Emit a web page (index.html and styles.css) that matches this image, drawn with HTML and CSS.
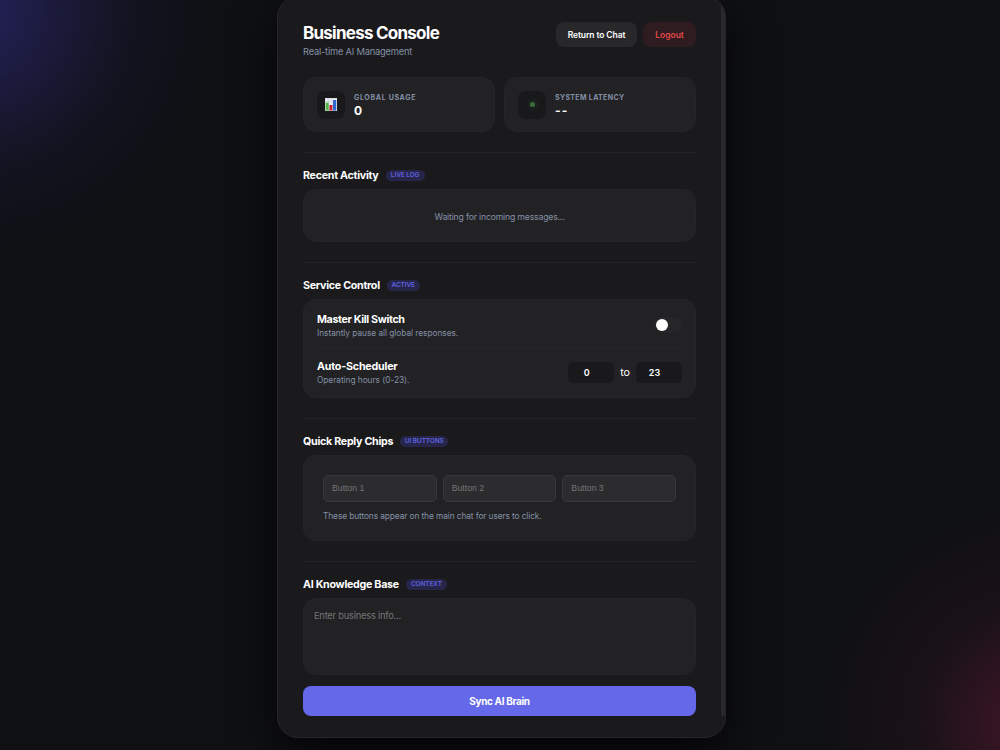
FILE: index.html
```
<!DOCTYPE html>
<html lang="en">
<head>
    <meta charset="UTF-8">
    <meta name="viewport" content="width=device-width, initial-scale=1.0">
    <title>Business Console</title>
    <link rel="stylesheet" href="styles.css">
</head>
<body>
    <main class="console">
        <!-- Header -->
        <header class="header">
            <div>
                <h1 class="title">Business Console</h1>
                <p class="subtitle">Real-time AI Management</p>
            </div>
            <div class="header-actions">
                <button class="btn btn-chat">Return to Chat</button>
                <button class="btn btn-logout">Logout</button>
            </div>
        </header>

        <!-- Stats -->
        <div class="stats">
            <div class="stat">
                <div class="stat-icon">
                    <svg width="12" height="13" viewBox="0 0 12 13">
                        <rect width="12" height="13" fill="#e6eaf3"/>
                        <path d="M0 .5H12M0 3.5H12M3.5 0V13M7.5 0V13" stroke="#c5ccda" stroke-width=".4"/>
                        <rect x=".6" y="4.6" width="3.1" height="8" fill="#55b649"/>
                        <rect x="4.4" y="7" width="3" height="5.6" fill="#c9252d"/>
                        <rect x="8" y="2" width="3.2" height="10.6" fill="#2f67cf"/>
                    </svg>
                </div>
                <div class="stat-text">
                    <div class="stat-label usage-label">GLOBAL USAGE</div>
                    <div class="stat-value">0</div>
                </div>
            </div>
            <div class="stat">
                <div class="stat-icon"><span class="dot"></span></div>
                <div class="stat-text">
                    <div class="stat-label latency-label">SYSTEM LATENCY</div>
                    <div class="stat-value dashes">--</div>
                </div>
            </div>
        </div>

        <!-- Recent Activity -->
        <section class="section">
            <h2 class="section-title">Recent Activity <span class="badge b-live">LIVE LOG</span></h2>
            <div class="box log">Waiting for incoming messages...</div>
        </section>

        <!-- Service Control -->
        <section class="section">
            <h2 class="section-title">Service Control <span class="badge b-active">ACTIVE</span></h2>
            <div class="box controls">
                <div class="control-row">
                    <div>
                        <h3 class="control-name kill">Master Kill Switch</h3>
                        <p class="control-desc">Instantly pause all global responses.</p>
                    </div>
                    <span class="switch"></span>
                </div>
                <div class="control-row">
                    <div>
                        <h3 class="control-name">Auto-Scheduler</h3>
                        <p class="control-desc">Operating hours (0-23).</p>
                    </div>
                    <div class="hours">
                        <input type="text" class="hour" value="0">
                        <span>to</span>
                        <input type="text" class="hour" value="23">
                    </div>
                </div>
            </div>
        </section>

        <!-- Quick Reply Chips -->
        <section class="section">
            <h2 class="section-title">Quick Reply Chips <span class="badge b-ui">UI BUTTONS</span></h2>
            <div class="box chips">
                <div class="chip-row">
                    <input type="text" class="chip" placeholder="Button 1">
                    <input type="text" class="chip" placeholder="Button 2">
                    <input type="text" class="chip" placeholder="Button 3">
                </div>
                <p class="chip-note">These buttons appear on the main chat for users to click.</p>
            </div>
        </section>

        <!-- AI Knowledge Base -->
        <section class="section">
            <h2 class="section-title">AI Knowledge Base <span class="badge b-context">CONTEXT</span></h2>
            <textarea class="box knowledge" placeholder="Enter business info..."></textarea>
        </section>

        <button class="sync">Sync AI Brain</button>
        <span class="scroll-thumb"></span>
    </main>
</body>
</html>
```
FILE: styles.css
```
* {
    box-sizing: border-box;
    margin: 0;
    padding: 0;
}
body {
    font-family: Inter, "Liberation Sans", sans-serif;
    height: 750px;
    overflow: hidden;
    color: white;
    background:
        radial-gradient(circle at -30px 10px, rgba(79, 70, 229, 0.34), rgba(79, 70, 229, 0.25) 50px, rgba(79, 70, 229, 0.16) 100px, rgba(79, 70, 229, 0.06) 160px, transparent 240px),
        radial-gradient(circle at 1040px 725px, rgba(210, 40, 100, 0.26), rgba(210, 40, 100, 0.19) 45px, rgba(210, 40, 100, 0.06) 120px, transparent 220px),
        #0f1014;
}
button, input, textarea {
    font-family: inherit;
    border: none;
    outline: none;
    color: white;
}
.console {
    position: relative;
    width: 449px;
    height: 742px;
    margin: -4px auto 0 277px;
    padding: 25px 29px 0 25px;
    background: #1a1a1c;
    border: 1px solid #252527;
    border-radius: 21px;
    box-shadow: 0 16px 44px rgba(0, 0, 0, 0.75);
    overflow: hidden;
}
.header {
    display: flex;
    justify-content: space-between;
    height: 55px;
}
.title {
    font-size: 17px;
    line-height: 23px;
    letter-spacing: -0.75px;
    white-space: nowrap;
}
.subtitle {
    font-size: 9.3px;
    line-height: 14px;
    letter-spacing: -0.2px;
    color: #8490a6;
}
.header-actions {
    display: flex;
    gap: 6px;
}
.btn {
    height: 25px;
    border-radius: 8px;
    font-size: 8.5px;
    font-weight: 600;
    letter-spacing: -0.1px;
}
.btn-chat {
    width: 81px;
    background: #28282a;
}
.btn-logout {
    width: 53px;
    background: #2e1c20;
    color: #e24a4a;
    letter-spacing: 0;
}
.stats {
    display: grid;
    grid-template-columns: 1fr 1fr;
    gap: 9px;
    height: 55px;
    margin-bottom: 20px;
}
.stat {
    display: flex;
    align-items: center;
    gap: 9px;
    padding: 0 13px;
    background: #222224;
    border: 1px solid #252527;
    border-radius: 13px;
}
.stat-icon {
    width: 28px;
    height: 28px;
    border-radius: 8px;
    background: #19191b;
    display: flex;
    align-items: center;
    justify-content: center;
}
.dot {
    width: 5px;
    height: 5px;
    border-radius: 50%;
    background: #38703b;
    box-shadow: 0 0 6px rgba(56, 142, 60, 0.45);
}
.stat-text {
    padding-top: 2px;
}
.stat-label {
    font-size: 7px;
    line-height: 10px;
    font-weight: 700;
    color: #8490a6;
}
.usage-label {
    letter-spacing: 0.68px;
}
.latency-label {
    letter-spacing: 0.35px;
}
.stat-value {
    font-size: 12px;
    line-height: 16px;
    font-weight: 700;
}
.dashes {
    letter-spacing: 1.2px;
}
.section {
    border-top: 1px solid #242426;
    padding-top: 15px;
    margin-bottom: 20px;
}
.section-title {
    display: flex;
    align-items: center;
    gap: 7px;
    height: 15px;
    margin-bottom: 6px;
    font-size: 10.7px;
    font-weight: 700;
    letter-spacing: -0.28px;
    white-space: nowrap;
}
.badge {
    height: 11px;
    border-radius: 6px;
    background: #27264a;
    color: #5f61e0;
    font-size: 6.5px;
    font-weight: 600;
    line-height: 11px;
    letter-spacing: -0.1px;
    text-align: center;
}
.b-live {
    width: 39px;
}
.b-active {
    width: 33px;
}
.b-ui {
    width: 48px;
}
.b-context {
    width: 41px;
}
.box {
    background: #222224;
    border: 1px solid #252527;
    border-radius: 13px;
}
.log {
    height: 53px;
    line-height: 55px;
    text-align: center;
    font-size: 8.7px;
    letter-spacing: -0.19px;
    color: #8490a6;
}
.controls {
    height: 99px;
    padding: 2px 13px 0;
}
.control-row {
    display: flex;
    justify-content: space-between;
    align-items: center;
    height: 46px;
}
.control-row + .control-row {
    height: 48px;
    border-top: 1px solid #262628;
}
.control-name {
    font-size: 10.7px;
    line-height: 15px;
    letter-spacing: -0.2px;
}
.kill {
    letter-spacing: -0.35px;
}
.control-desc {
    font-size: 8.3px;
    line-height: 12px;
    letter-spacing: -0.03px;
    color: #8490a6;
}
.switch {
    width: 28px;
    height: 16px;
    border-radius: 8px;
    background: #262628;
    padding: 2px;
}
.switch::before {
    content: "";
    display: block;
    width: 12px;
    height: 12px;
    border-radius: 50%;
    background: white;
}
.hours {
    display: flex;
    align-items: center;
    gap: 6px;
    font-size: 10.7px;
}
.hour {
    width: 46px;
    height: 21px;
    padding-right: 9px;
    border-radius: 5px;
    background: #19191b;
    font-size: 9px;
    font-weight: 600;
    text-align: center;
}
.chips {
    height: 86px;
    padding: 19px 19px 0;
}
.chip-row {
    display: flex;
    gap: 6px;
}
.chip {
    flex: 1;
    min-width: 0;
    height: 27px;
    padding: 0 8px 2px;
    border: 1px solid #38383a;
    border-radius: 5px;
    background: #2c2c2e;
    font-family: "Liberation Sans", Arial, sans-serif;
    font-size: 8.7px;
}
.chip::placeholder, .knowledge::placeholder {
    color: #757575;
}
.chip-note {
    margin-top: 8px;
    font-size: 8.4px;
    line-height: 12px;
    letter-spacing: -0.12px;
    color: #8490a6;
}
.knowledge {
    display: block;
    width: 100%;
    height: 77px;
    padding: 11px 10px;
    font-size: 9.3px;
    letter-spacing: -0.22px;
    resize: none;
}
.sync {
    display: block;
    width: 100%;
    height: 30px;
    margin-top: -9px;
    border-radius: 8px;
    background: #6468e9;
    font-size: 10px;
    font-weight: 700;
    letter-spacing: -0.35px;
}
/* Scrollbar thumb over the card edge */
.scroll-thumb {
    position: absolute;
    top: 0;
    right: 0;
    width: 4px;
    height: 719px;
    background: #29292b;
    border-radius: 0 0 3px 3px;
}
```
